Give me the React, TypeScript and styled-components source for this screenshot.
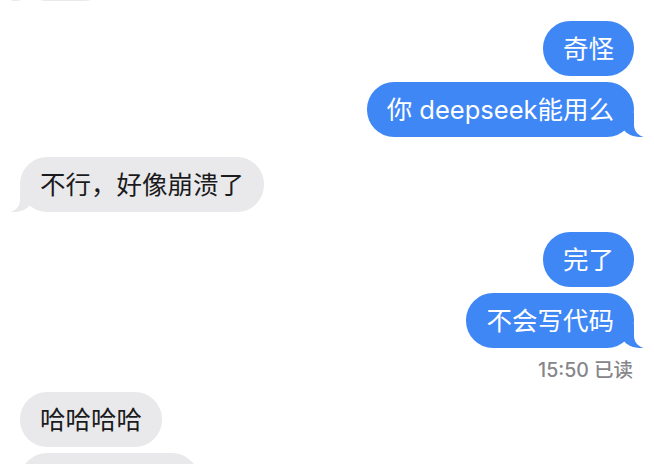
import React from "react";
import styled, { createGlobalStyle, css } from "styled-components";

const GlobalStyle = createGlobalStyle`
  html, body {
    margin: 0;
    padding: 0;
    background: #ffffff;
    overflow: hidden;
  }
  body {
    font-family: Inter, "Noto Sans CJK SC", "Noto Sans", sans-serif;
    -webkit-font-smoothing: antialiased;
  }
`;

const BLUE = "#3f87f5";
const GRAY = "#e9e9eb";

const Screen = styled.div`
  width: 654px;
  height: 464px;
  overflow: hidden;
  background: #ffffff;
`;

const Thread = styled.div`
  display: flex;
  flex-direction: column;
  padding: 0 20px;
  margin-top: -54px;
`;

const Group = styled.div<{ $sent: boolean }>`
  display: flex;
  flex-direction: column;
  align-items: ${(p) => (p.$sent ? "flex-end" : "flex-start")};
  gap: 6px;
  & + & {
    margin-top: 20px;
  }
`;

const Bubble = styled.div<{ $sent: boolean; $tail: boolean }>`
  position: relative;
  box-sizing: border-box;
  height: 55px;
  padding: 10px 20px;
  border-radius: 27px;
  font-size: 25.5px;
  line-height: 35px;
  white-space: nowrap;
  background: ${(p) => (p.$sent ? BLUE : GRAY)};
  color: ${(p) => (p.$sent ? "#ffffff" : "#1b1b1d")};

  ${(p) =>
    p.$tail &&
    css`
      &::before,
      &::after {
        content: "";
        position: absolute;
        bottom: 0;
        height: 24px;
      }
      &::before {
        width: 22px;
        background: ${p.$sent ? BLUE : GRAY};
        ${p.$sent
          ? css`
              right: -9px;
              border-bottom-left-radius: 18px 15px;
            `
          : css`
              left: -9px;
              border-bottom-right-radius: 18px 15px;
            `}
      }
      &::after {
        width: 30px;
        background: #ffffff;
        ${p.$sent
          ? css`
              right: -30px;
              border-bottom-left-radius: 12px;
            `
          : css`
              left: -30px;
              border-bottom-right-radius: 12px;
            `}
      }
    `}
`;

const Receipt = styled.div`
  align-self: flex-end;
  margin: 4px 1px -10px 0;
  font-size: 19.5px;
  line-height: 24px;
  font-weight: 500;
  color: #86868a;
`;

type Msg = { text: string };
type G = { sent: boolean; msgs: Msg[]; receipt?: string };

const groups: G[] = [
  { sent: false, msgs: [{ text: "在吗" }] },
  { sent: true, msgs: [{ text: "奇怪" }, { text: "你 deepseek能用么" }] },
  { sent: false, msgs: [{ text: "不行，好像崩溃了" }] },
  {
    sent: true,
    msgs: [{ text: "完了" }, { text: "不会写代码" }],
    receipt: "15:50 已读",
  },
  { sent: false, msgs: [{ text: "哈哈哈哈" }, { text: "那怎么办 hh" }] },
];

export default function App() {
  return (
    <Screen>
      <GlobalStyle />
      <Thread>
        {groups.map((g, gi) => (
          <Group key={gi} $sent={g.sent}>
            {g.msgs.map((m, mi) => (
              <Bubble key={mi} $sent={g.sent} $tail={mi === g.msgs.length - 1}>
                {m.text}
              </Bubble>
            ))}
            {g.receipt && <Receipt>{g.receipt}</Receipt>}
          </Group>
        ))}
      </Thread>
    </Screen>
  );
}
